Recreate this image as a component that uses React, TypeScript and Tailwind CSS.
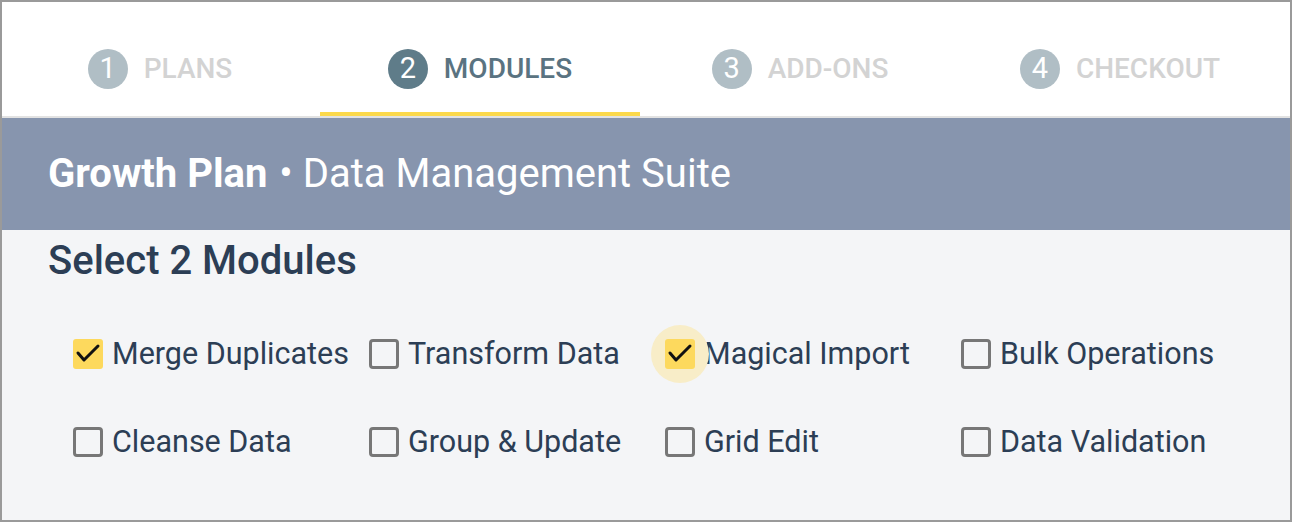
import React from "react";

const tabs = [
  { n: 1, label: "PLANS", active: false },
  { n: 2, label: "MODULES", active: true },
  { n: 3, label: "ADD-ONS", active: false },
  { n: 4, label: "CHECKOUT", active: false },
];

const modules = [
  { label: "Merge Duplicates", checked: true },
  { label: "Transform Data", checked: false },
  { label: "Magical Import", checked: true, focus: true },
  { label: "Bulk Operations", checked: false },
  { label: "Cleanse Data", checked: false },
  { label: "Group & Update", checked: false },
  { label: "Grid Edit", checked: false },
  { label: "Data Validation", checked: false },
];

function Box({ checked, focus }: { checked: boolean; focus?: boolean }) {
  return (
    <div className="relative w-[30px] h-[30px] shrink-0">
      {focus && (
        <div className="absolute left-1/2 top-1/2 w-[58px] h-[58px] -translate-x-1/2 -translate-y-1/2 rounded-full bg-[#f8edc8]" />
      )}
      {checked ? (
        <div className="relative w-[30px] h-[30px] rounded-[3px] bg-[#fdd95d]">
          <svg viewBox="0 0 30 30" className="w-[30px] h-[30px]">
            <polyline points="5,14 11,21 25,7" fill="none" stroke="#111" strokeWidth="3" strokeLinecap="round" strokeLinejoin="round" />
          </svg>
        </div>
      ) : (
        <div className="relative w-[30px] h-[30px] rounded-[4px] border-[3px] border-[#777]" />
      )}
    </div>
  );
}

export default function App() {
  return (
    <div className="w-[1292px] h-[522px] border-2 border-[#9a9a9a] bg-[#f4f5f7] font-['Roboto',sans-serif] flex flex-col overflow-hidden">
      <div className="h-[116px] shrink-0 bg-white border-b-2 border-[#e2e2e2]">
        <div className="h-full flex -ml-[2px]">
          {tabs.map((t) => (
            <div key={t.n} className="relative w-[320px] flex items-center justify-center gap-[16px] pt-[20px]">
              <div
                className={`w-[40px] h-[40px] rounded-full flex items-center justify-center text-white text-[29px] ${
                  t.active ? "bg-[#5f7c89]" : "bg-[#b0bec5]"
                }`}
              >
                {t.n}
              </div>
              <span className={`text-[28px] font-medium ${t.active ? "text-[#5a7381]" : "text-[#d3d3d3]"}`}>
                {t.label}
              </span>
              {t.active && <div className="absolute left-0 right-0 bottom-0 h-[4px] bg-[#fcd94b]" />}
            </div>
          ))}
        </div>
      </div>
      <div className="h-[112px] shrink-0 bg-[#8795ae] flex items-center pl-[46px] text-white text-[40px]">
        <span className="font-bold">Growth Plan</span>
        <span className="ml-[12px]">• Data Management Suite</span>
      </div>
      <div className="pl-[46px] pt-[7px]">
        <h2 className="text-[40px] leading-[48px] font-medium text-[#2c3e55]">Select 2 Modules</h2>
      </div>
      <div className="grid grid-cols-[repeat(4,296px)] pl-[71px] mt-[54px] gap-y-[58px]">
        {modules.map((m) => (
          <div key={m.label} className="flex items-center gap-[9px] h-[30px]">
            <Box checked={m.checked} focus={m.focus} />
            <span className="text-[30.5px] text-[#2c3e55] whitespace-nowrap">{m.label}</span>
          </div>
        ))}
      </div>
    </div>
  );
}
